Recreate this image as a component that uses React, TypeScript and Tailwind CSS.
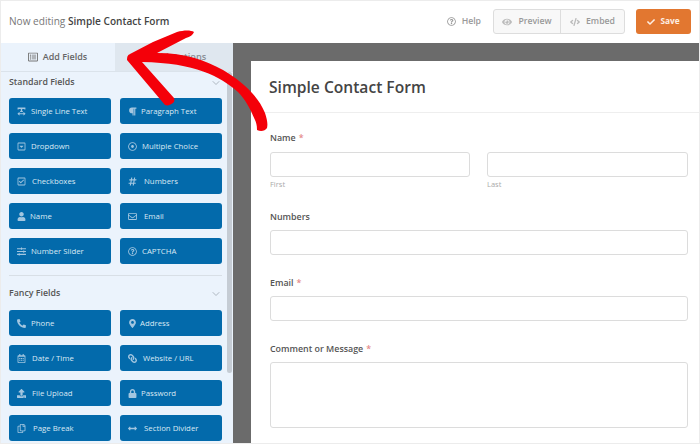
import type { IconType } from "react-icons";
import { ChevronDown } from "lucide-react";
import {
  FaArrowsAltH,
  FaCheck,
  FaCode,
  FaEye,
  FaHashtag,
  FaLink,
  FaLock,
  FaMapMarkerAlt,
  FaParagraph,
  FaPhoneAlt,
  FaRegCalendarAlt,
  FaRegCaretSquareDown,
  FaRegCheckSquare,
  FaRegCopy,
  FaRegDotCircle,
  FaRegEnvelope,
  FaRegListAlt,
  FaRegQuestionCircle,
  FaSlidersH,
  FaTextWidth,
  FaUpload,
  FaUser,
} from "react-icons/fa";

interface Field {
  label: string;
  Icon: IconType;
  iconBox: string;
  flip?: boolean;
}

const standardFields: Field[] = [
  { label: "Single Line Text", Icon: FaTextWidth, iconBox: "w-[14px]" },
  { label: "Paragraph Text", Icon: FaParagraph, iconBox: "w-[13px]" },
  { label: "Dropdown", Icon: FaRegCaretSquareDown, iconBox: "w-[14px]" },
  { label: "Multiple Choice", Icon: FaRegDotCircle, iconBox: "w-[14px]" },
  { label: "Checkboxes", Icon: FaRegCheckSquare, iconBox: "w-[15px]" },
  { label: "Numbers", Icon: FaHashtag, iconBox: "w-[16px]" },
  { label: "Name", Icon: FaUser, iconBox: "w-[13px]" },
  { label: "Email", Icon: FaRegEnvelope, iconBox: "w-[16px]" },
  { label: "Number Slider", Icon: FaSlidersH, iconBox: "w-[14px]" },
  { label: "CAPTCHA", Icon: FaRegQuestionCircle, iconBox: "w-[14px]" },
];

const fancyFields: Field[] = [
  { label: "Phone", Icon: FaPhoneAlt, iconBox: "w-[14px]" },
  { label: "Address", Icon: FaMapMarkerAlt, iconBox: "w-[12px]" },
  { label: "Date / Time", Icon: FaRegCalendarAlt, iconBox: "w-[15px]" },
  { label: "Website / URL", Icon: FaLink, iconBox: "w-[15px]", flip: true },
  { label: "File Upload", Icon: FaUpload, iconBox: "w-[15px]" },
  { label: "Password", Icon: FaLock, iconBox: "w-[13px]" },
  { label: "Page Break", Icon: FaRegCopy, iconBox: "w-[16px]" },
  { label: "Section Divider", Icon: FaArrowsAltH, iconBox: "w-[16px]" },
];

function FieldGrid({ fields }: { fields: Field[] }) {
  return (
    <div className="grid grid-cols-[102px_102px] gap-x-[9px] gap-y-[9px]">
      {fields.map(({ label, Icon, iconBox, flip }) => (
        <div
          key={label}
          className="flex h-[26px] items-center rounded-[3px] bg-[#036aab] pt-px pl-2 text-[7.8px] text-[#dbe9f4]"
        >
          <span className={`${iconBox} shrink-0 text-[#a3c6e0]`}>
            <Icon size={9} className={flip ? "-scale-x-100" : undefined} />
          </span>
          {label}
        </div>
      ))}
    </div>
  );
}

function SectionTitle({ title }: { title: string }) {
  return (
    <div className="flex h-[15px] w-[213px] items-center justify-between text-[8.8px] font-semibold text-[#555]">
      {title}
      <ChevronDown size={12} strokeWidth={1.5} className="text-[#9aa3ac]" />
    </div>
  );
}

function FormField({ label, required, tall }: { label: string; required?: boolean; tall?: boolean }) {
  return (
    <div className="mb-[21px]">
      <div className="mb-[6px] h-[14px] text-[8.9px] leading-[14px] font-semibold text-[#555]">
        {label}
        {required && <span className="ml-[3px] text-[#e58a8a]">*</span>}
      </div>
      <div className={`${tall ? "h-[66px]" : "h-[25px]"} rounded-[3px] border border-[#dcdcdc] bg-white`} />
    </div>
  );
}

export default function App() {
  return (
    <div className="relative h-[444px] w-[700px] overflow-hidden bg-white font-['Open_Sans',sans-serif]">
      <header className="flex h-[43px] items-center pr-[9px] pl-[9px]">
        <div className="text-[10.1px] text-[#777]">
          Now editing <span className="font-semibold text-[#444]">Simple Contact Form</span>
        </div>
        <div className="ml-auto flex items-center text-[8.7px] font-semibold text-[#999]">
          <FaRegQuestionCircle size={9} className="mr-[6px]" />
          Help
          <div className="mr-[11px] ml-[12px] flex h-[25px] rounded-[3px] border border-[#ddd] bg-[#f8f8f8]">
            <div className="flex w-[67px] items-center justify-center gap-[6px] border-r border-[#ddd]">
              <FaEye size={10} className="text-[#bbb]" />
              Preview
            </div>
            <div className="flex w-[63px] items-center justify-center gap-[6px]">
              <FaCode size={10} className="text-[#bbb]" />
              Embed
            </div>
          </div>
          <div className="flex h-[25px] w-[55px] items-center justify-center gap-[5px] rounded-[3px] bg-[#e27730] text-[8.3px] font-bold text-[#fdeee3]">
            <FaCheck size={8} />
            Save
          </div>
        </div>
      </header>

      <div className="flex h-[401px]">
        <aside className="flex w-[233px] shrink-0 flex-col bg-[#ebf3fc]">
          <div className="flex h-[29px] shrink-0 border-b border-[#dbe3eb]">
            <div className="flex w-[115px] items-center justify-center gap-[5px] text-[9px] font-semibold text-[#666]">
              <FaRegListAlt size={10} className="text-[#777]" />
              Add Fields
            </div>
            <div className="flex flex-1 items-center justify-center bg-[#dfe7ef] pl-[6px] text-[9.2px] font-semibold text-[#8a8f96]">
              Field Options
            </div>
          </div>
          <div className="flex min-h-0 flex-1">
            <div className="w-[222px] shrink-0 pt-[3px] pl-[9px]">
              <div className="mb-[8px]">
                <SectionTitle title="Standard Fields" />
              </div>
              <FieldGrid fields={standardFields} />
              <div className="mt-[11px] mb-[10px] h-px w-[213px] bg-[#d8dfe6]" />
              <div className="mb-[9px]">
                <SectionTitle title="Fancy Fields" />
              </div>
              <FieldGrid fields={fancyFields} />
            </div>
            <div className="ml-[5px] w-[5px]">
              <div className="h-[301px] rounded-[3px] bg-[#c5ccd4]" />
            </div>
          </div>
        </aside>

        <main className="flex-1 bg-[#6b6b6b] pt-[18px] pl-[18px]">
          <div className="h-[383px] bg-white">
            <div className="flex h-[52px] items-center border-b border-[#eee] pt-[3px] pl-[18px] text-[15.6px] font-semibold text-[#444]">
              Simple Contact Form
            </div>
            <div className="pt-[18px] pr-[12px] pl-[19px]">
              <div className="mb-[7px] h-[14px] text-[8.9px] leading-[14px] font-semibold text-[#555]">
                Name<span className="ml-[3px] text-[#e58a8a]">*</span>
              </div>
              <div className="mb-[20px] grid grid-cols-[200px_201px] gap-x-[17px]">
                <div>
                  <div className="h-[25px] rounded-[3px] border border-[#dcdcdc]" />
                  <div className="mt-[2px] text-[7.5px] text-[#aaa]">First</div>
                </div>
                <div>
                  <div className="h-[25px] rounded-[3px] border border-[#dcdcdc]" />
                  <div className="mt-[2px] text-[7.5px] text-[#aaa]">Last</div>
                </div>
              </div>
              <FormField label="Numbers" />
              <FormField label="Email" required />
              <FormField label="Comment or Message" required tall />
            </div>
          </div>
        </main>
      </div>

      {/* thin frame of the screenshot */}
      <div className="pointer-events-none absolute inset-0 border border-[#ececec]" />

      <svg className="pointer-events-none absolute top-0 left-0" width="700" height="444" viewBox="0 0 700 444">
        <path
          d="M127 60 C127 56 128 55 130 54 L153 42 L177 32 C184 30 191 30 194 32 C193 35 190 37 186 38 L157 53 C185 53 205 60 223 70 C240 80 258 95 265 113 C267 119 268 124 267 128 C265 131 261 132 257 130 C257 125 256 122 255 120 C250 108 245 99 238 92 C220 76 195 63 142 62 L174 98 C175 100 174 102 173 103 C170 105 168 106 165 105 Z"
          fill="#f40009"
        />
      </svg>
    </div>
  );
}
